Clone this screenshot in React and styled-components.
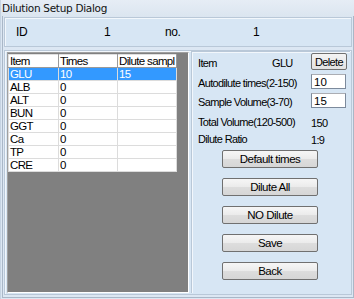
import React from 'react'
import styled, { createGlobalStyle } from 'styled-components'

const GlobalStyle = createGlobalStyle`
  html, body {
    margin: 0;
    padding: 0;
    background: #dce7f3;
  }
  body {
    font-family: "Liberation Sans", Arial, sans-serif;
  }
`

const rows = [
  { item: 'GLU', times: '10', sample: '15' },
  { item: 'ALB', times: '0', sample: '' },
  { item: 'ALT', times: '0', sample: '' },
  { item: 'BUN', times: '0', sample: '' },
  { item: 'GGT', times: '0', sample: '' },
  { item: 'Ca', times: '0', sample: '' },
  { item: 'TP', times: '0', sample: '' },
  { item: 'CRE', times: '0', sample: '' }
]

const buttons = ['Default times', 'Dilute All', 'NO Dilute', 'Save', 'Back']

const App = () => {
  return (
    <Window>
      <GlobalStyle />
      <TitleBar>Dilution Setup Dialog</TitleBar>
      <Body>
        <IdPanel>
          <IdCell>ID</IdCell>
          <IdCell>1</IdCell>
          <IdCell>no.</IdCell>
          <IdCell>1</IdCell>
        </IdPanel>
        <MainPanel>
          <ListBox>
            <Table>
              <thead>
                <tr>
                  <Th>Item</Th>
                  <Th>Times</Th>
                  <Th>Dilute sampl</Th>
                </tr>
              </thead>
              <tbody>
                {rows.map((r, i) => (
                  <Tr key={r.item} selected={i === 0}>
                    <Td>{r.item}</Td>
                    <Td>{r.times}</Td>
                    <Td>{r.sample}</Td>
                  </Tr>
                ))}
              </tbody>
            </Table>
          </ListBox>
          <SideBox>
            <Row>
              <ItemLabel>Item</ItemLabel>
              <ItemValue>GLU</ItemValue>
              <SmallButton>Delete</SmallButton>
            </Row>
            <Row gap={3}>
              <Label>Autodilute times(2-150)</Label>
              <Input defaultValue="10" />
            </Row>
            <Row gap={2}>
              <Label>Sample Volume(3-70)</Label>
              <Input defaultValue="15" />
            </Row>
            <Row gap={3}>
              <Label>Total Volume(120-500)</Label>
              <Value>150</Value>
            </Row>
            <Row>
              <Label>Dilute Ratio</Label>
              <Value>1:9</Value>
            </Row>
            <Buttons>
              {buttons.map((b) => (
                <Button key={b}>{b}</Button>
              ))}
            </Buttons>
          </SideBox>
        </MainPanel>
      </Body>
    </Window>
  )
}

const Window = styled.div`
  width: 354px;
  height: 299px;
  box-sizing: border-box;
  display: flex;
  flex-direction: column;
  background: #dce7f3;
  border-left: 1px solid #c5d3e2;
  font-size: 11px;
  letter-spacing: -0.65px;
  color: #000;
`

const TitleBar = styled.div`
  height: 17px;
  line-height: 16px;
  padding-left: 1px;
  font-family: "DejaVu Sans", sans-serif;
  font-size: 10.5px;
  letter-spacing: -0.3px;
  color: #111;
  background: linear-gradient(#e6edf5, #dbe5f0);
`

const Body = styled.div`
  flex: 1;
  display: flex;
  flex-direction: column;
  gap: 3px;
  padding: 0 2px 4px 3px;
  position: relative;
  &::before {
    content: '';
    position: absolute;
    left: 1px;
    right: 0;
    top: -1px;
    bottom: 1px;
    border: 1px solid #a9b7c7;
    border-top: none;
    pointer-events: none;
  }
`

const Panel = styled.div`
  box-sizing: border-box;
  background: #d7e6f4;
  border: 1px solid #b9c8d8;
  box-shadow: inset 1px 1px 0 #f2f7fc;
`

const IdPanel = styled(Panel)`
  height: 30px;
  display: grid;
  grid-template-columns: 88px 61px 88px auto;
  align-items: center;
  padding-left: 11px;
  font-size: 12px;
  letter-spacing: -0.4px;
`

const IdCell = styled.span``

const MainPanel = styled(Panel)`
  height: 245px;
  display: flex;
  padding: 1px;
`

const ListBox = styled.div`
  width: 182px;
  height: 241px;
  box-sizing: border-box;
  margin-left: 1px;
  background: #808080;
  border: 1px solid;
  border-color: #a0a0a0 #ffffff #ffffff #a0a0a0;
  padding: 1px 0 0 0;
`

const Table = styled.table`
  border-collapse: collapse;
  background: #fff;
  table-layout: fixed;
  width: 169px;
  border-left: 1px solid #fff;
`

const Th = styled.th`
  height: 12px;
  padding: 0 0 0 1px;
  text-align: left;
  font-weight: normal;
  background: #fff;
  border: 1px solid #9a9a9a;
  border-top-color: #e0e0e0;
  border-left-color: #e0e0e0;
  white-space: nowrap;
  overflow: hidden;
  font-size: 11.5px;
  &:nth-child(1) { width: 48px; }
  &:nth-child(2) { width: 57px; }
`

const Tr = styled.tr`
  background: ${(p) => (p.selected ? '#3399ff' : '#fff')};
  color: ${(p) => (p.selected ? '#fff' : '#000')};
`

const Td = styled.td`
  height: 12px;
  padding: 0 0 0 1px;
  border: 1px solid #dcdcdc;
  font-size: 11.5px;
  line-height: 12px;
  white-space: nowrap;
`

const SideBox = styled.div`
  flex: 1;
  margin-left: 2px;
  margin-top: -1px;
  border-left: 1px solid #b9c8d8;
  border-top: 1px solid #b9c8d8;
  box-shadow: inset 1px 1px 0 #f2f7fc;
  padding: 1px 0 0 6px;
  display: flex;
  flex-direction: column;
`

const Row = styled.div`
  height: 17px;
  display: flex;
  align-items: center;
  margin-top: ${(p) => p.gap || 0}px;
`

const Label = styled.span`
  width: 113px;
  padding-top: 2px;
  white-space: nowrap;
`

const ItemLabel = styled.span`
  width: 74px;
  padding-top: 3px;
`

const ItemValue = styled.span`
  width: 39px;
  padding-top: 3px;
`

const Value = styled.span`
  padding-top: 4px;
`

const SmallButton = styled.button`
  width: 36px;
  height: 17px;
  padding: 0;
  font: inherit;
  font-size: 11px;
  letter-spacing: -0.6px;
  border: 1px solid #707070;
  border-radius: 2px;
  background: linear-gradient(#f4f4f4, #e2e2e2);
  color: #000;
`

const Input = styled.input`
  width: 35px;
  height: 15px;
  box-sizing: border-box;
  padding: 0 0 0 2px;
  border: 1px solid #7c8a9c;
  border-top-color: #abadb3;
  font: inherit;
  font-size: 11.5px;
  background: #fff;
  outline: none;
`

const Buttons = styled.div`
  display: flex;
  flex-direction: column;
  gap: 10px;
  margin-top: 4px;
  padding-left: 24px;
`

const Button = styled.button`
  width: 96px;
  height: 18px;
  padding: 0;
  font: inherit;
  font-size: 11.5px;
  letter-spacing: -0.5px;
  color: #000;
  border: 1px solid #707070;
  border-radius: 2px;
  background: linear-gradient(#f6f6f6 0%, #ebebeb 50%, #dddddd 51%, #d6d6d6 100%);
`

export default App
